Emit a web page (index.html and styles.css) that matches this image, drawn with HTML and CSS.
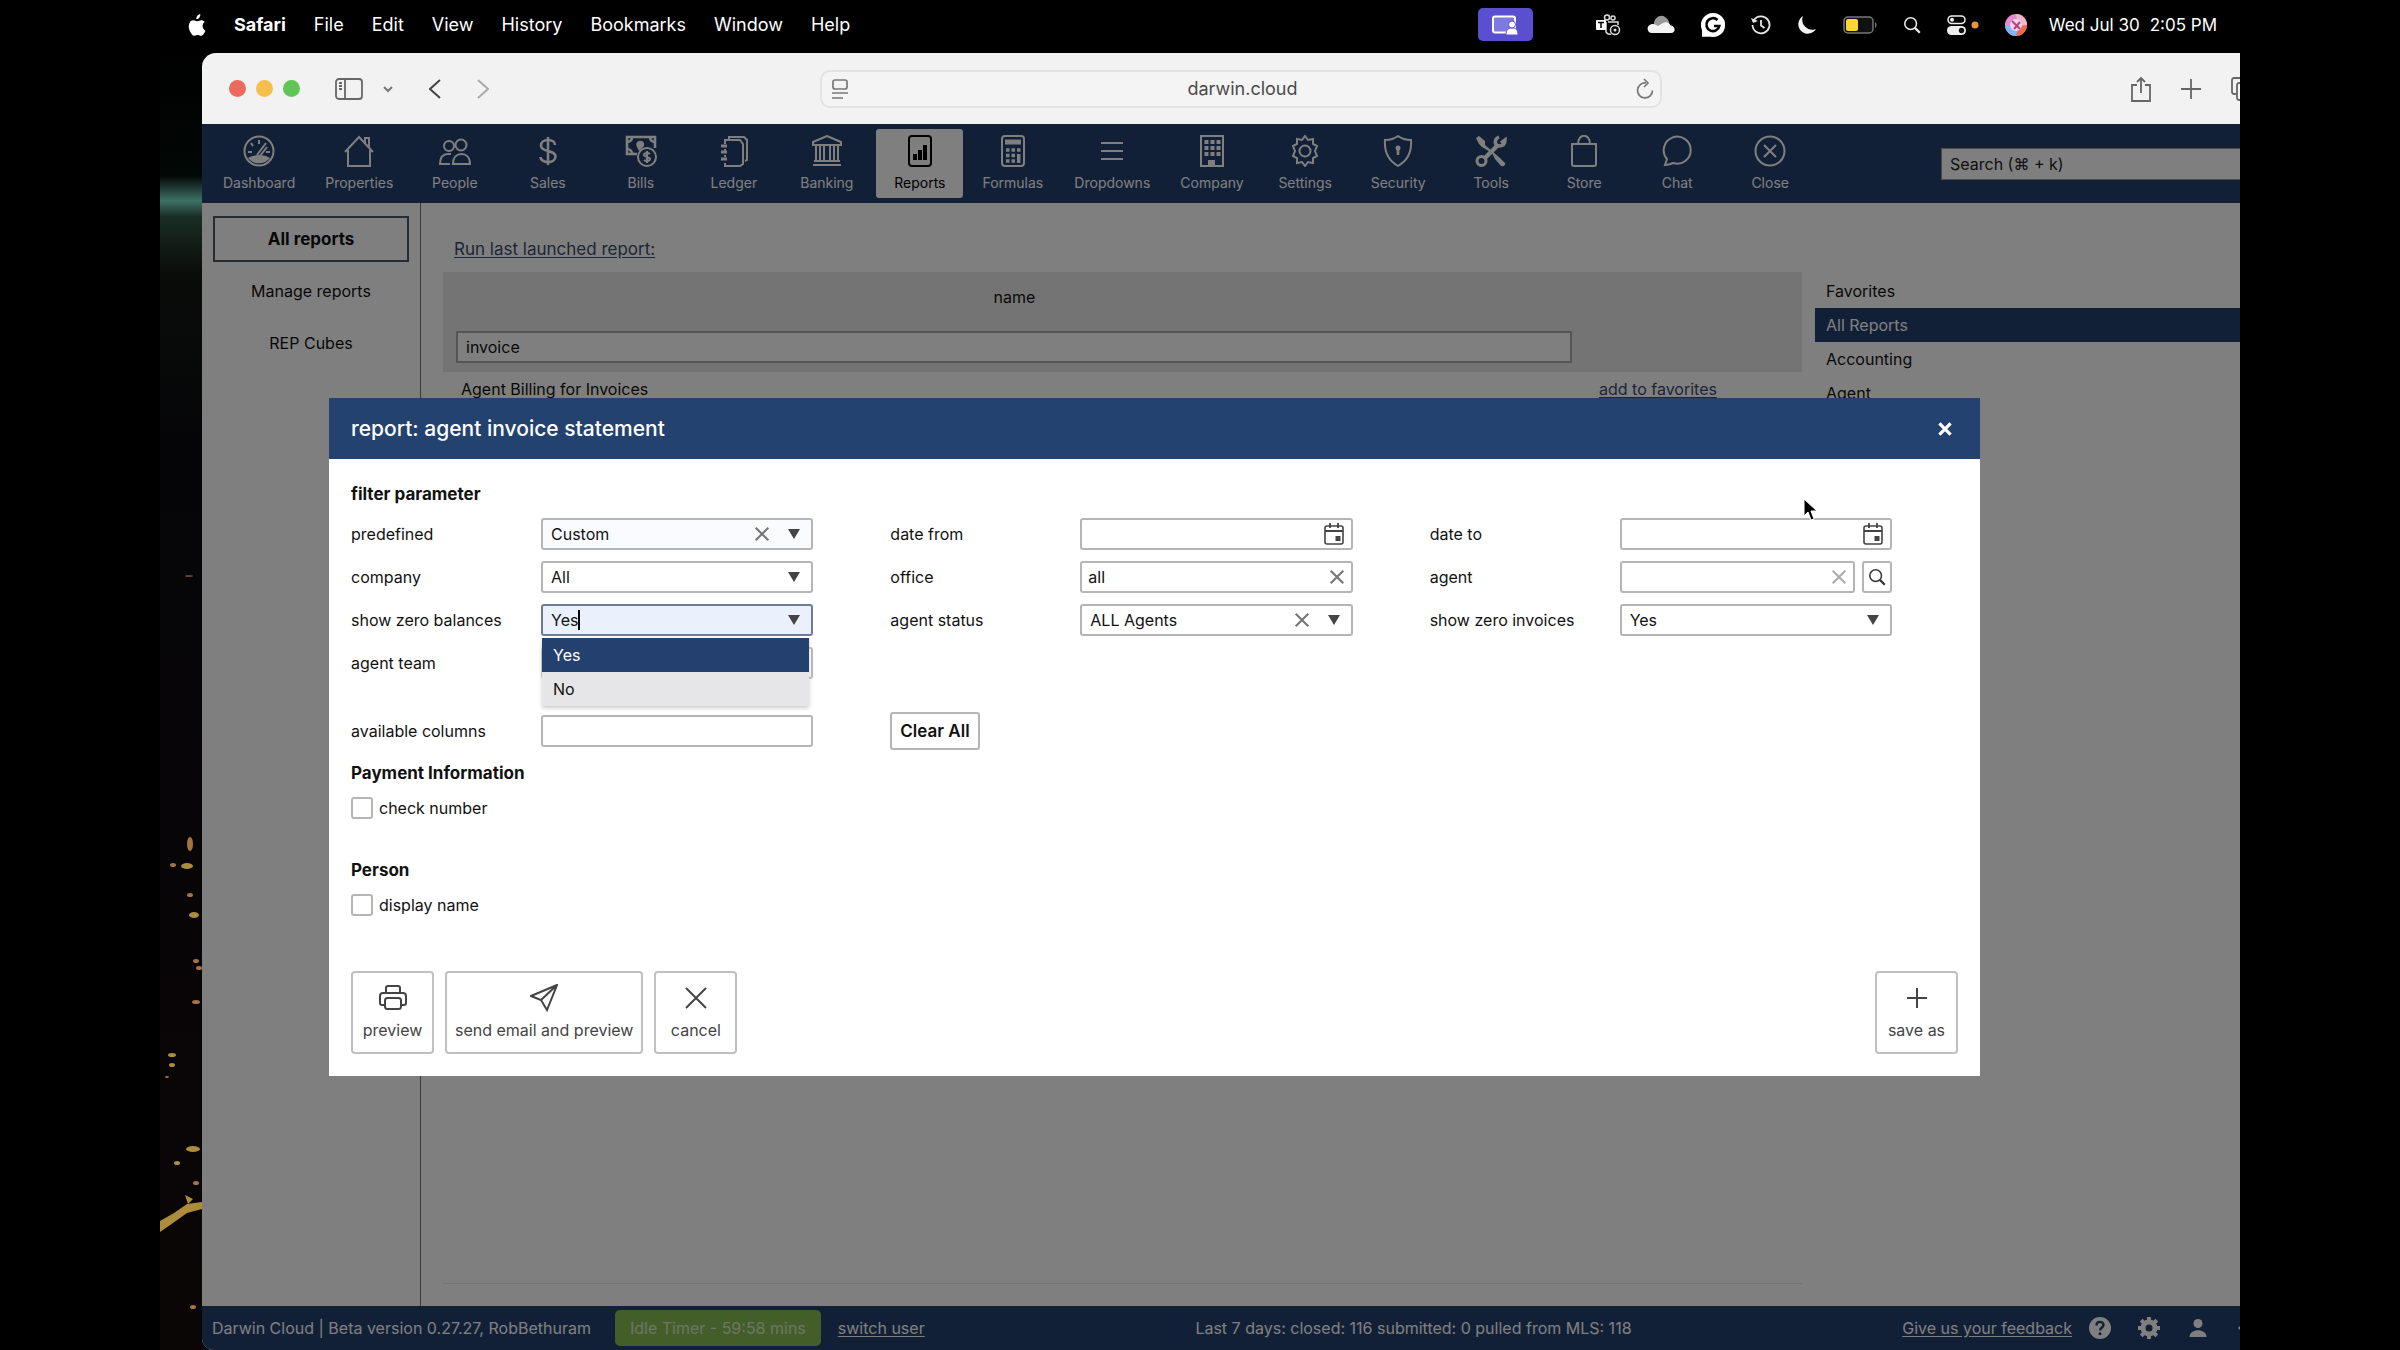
FILE: index.html
```html
<!DOCTYPE html>
<html lang="en">
<head>
    <meta charset="UTF-8">
    <meta name="viewport" content="width=device-width, initial-scale=1.0">
    <title>Darwin Cloud - Reports</title>
    <link rel="stylesheet" href="styles.css">
</head>
<body>
    <!-- shared icons -->
    <svg class="sprite" aria-hidden="true">
        <symbol id="i-x" viewBox="0 0 20 20"><path d="M3 3l14 14M17 3L3 17" fill="none" stroke="currentColor" stroke-width="2.4"/></symbol>
        <symbol id="i-x-bold" viewBox="0 0 20 20"><path d="M3 3l14 14M17 3L3 17" fill="none" stroke="currentColor" stroke-width="4"/></symbol>
        <symbol id="i-down" viewBox="0 0 12 10"><path d="M0 0h12L6 10z" fill="currentColor"/></symbol>
        <symbol id="i-calendar" viewBox="0 0 20 22">
            <rect x="1" y="3" width="18" height="18" rx="2" fill="none" stroke="currentColor" stroke-width="1.6"/>
            <path d="M1 8h18M6 0v5M14 0v5" fill="none" stroke="currentColor" stroke-width="1.8"/>
            <rect x="11.500" y="13" width="5" height="5" fill="currentColor"/>
        </symbol>
        <symbol id="i-search" viewBox="0 0 20 20"><circle cx="8.500" cy="8.500" r="6.500" fill="none" stroke="currentColor" stroke-width="1.700"/><path d="M13.200 13.200l5.500 5.500" stroke="currentColor" stroke-width="2.400"/></symbol>
    </svg>

    <div class="screen">
        <header class="menubar">
            <svg class="apple" viewBox="0 0 18 22"><path d="M12.300 0c.2 1.700-.5 3-1.300 3.900-.8.900-1.700 1.300-2.700 1.200-.1-1.500.5-2.700 1.300-3.500C10.400.7 11.500.1 12.300 0zM17.400 16.800c-.5 1.300-1.100 2.200-1.800 3.200-.8 1.100-1.600 1.800-2.500 1.800-1.200 0-1.900-.8-3.500-.8s-2.300.8-3.500.8c-1 0-1.900-.9-2.700-2C1 16.300 0 12.400 1.300 9.400c.8-1.900 2.400-3.100 4.100-3.100 1.500 0 2.500.9 3.900.9 1.300 0 2.300-.9 4-.9 1.300 0 2.600.6 3.500 1.800-3.300 1.900-2.700 6.800.6 8.700z" fill="#fff"/></svg>
            <nav class="menus">
                <strong>Safari</strong>
                <span>File</span>
                <span>Edit</span>
                <span>View</span>
                <span>History</span>
                <span>Bookmarks</span>
                <span>Window</span>
                <span>Help</span>
            </nav>
            <div class="status">
                <span class="share-badge">
                    <svg width="28" height="20" viewBox="0 0 28 20"><rect x="2" y="1.500" width="22" height="16" rx="2" fill="#7f7ae0" stroke="#fff" stroke-width="2"/><path d="M15 20c0-5 2-7 6-7s6 2 6 7z" fill="#fff" stroke="#5a50cf"/><circle cx="21" cy="9.500" r="3.500" fill="#fff" stroke="#5a50cf"/></svg>
                </span>
                <div class="status-icons">
                    <svg width="26" height="22" viewBox="0 0 26 22"><g fill="none" stroke="#ddd" stroke-width="1.500"><circle cx="12" cy="3.500" r="2.500"/><circle cx="18" cy="4" r="2"/><path d="M13 8h10v3M11 8v10c2 3 5 2 5 2"/><circle cx="20" cy="16" r="4.500"/></g><rect x="1" y="6" width="10" height="10" rx="1" fill="#fff"/><path d="M3 8.500h6M6 8.500V14" stroke="#000" stroke-width="1.500"/><circle cx="20" cy="16" r="1.500" fill="#ddd"/></svg>
                    <svg width="28" height="19" viewBox="0 0 28 19"><path d="M7 8C8 2 14-1 18 2c3 2 4 4 4 6l-9 6-7-3z" fill="#9a9a9a"/><path d="M5 18C-1 18-1 9 6 9c2 0 3 1 5 2l5-3c4-2 7 0 7 2 6 1 6 8 1 8z" fill="#f4f4f4"/></svg>
                    <svg width="24" height="24" viewBox="0 0 24 24"><path d="M12 0a12 12 0 1 1-2 23.800H1V17A12 12 0 0 1 12 0z" fill="#fff"/><path d="M16.500 7a6.500 6.500 0 1 0 1.800 6H13" fill="none" stroke="#000" stroke-width="2.600"/></svg>
                    <svg width="20" height="20" viewBox="0 0 20 20"><path d="M3 5a8.500 8.500 0 1 1-1.500 5M10 5v5.500l3.500 2.500" fill="none" stroke="#e6e6e6" stroke-width="1.800"/><path d="M0 3l2 5 5-2z" fill="#e6e6e6"/></svg>
                    <svg width="20" height="20" viewBox="0 0 20 20"><path d="M6 1a9.500 9.500 0 1 0 13 13A10 10 0 0 1 6 1z" fill="#f2f2f2"/></svg>
                    <svg width="34" height="18" viewBox="0 0 34 18"><rect x="1" y="1" width="29" height="16" rx="4" fill="#111" stroke="#777" stroke-width="1.500"/><path d="M32 6c2 1 2 5 0 6z" fill="#777"/><rect x="3" y="3" width="12" height="12" rx="2" fill="#fbd82f"/></svg>
                    <svg width="18" height="20" viewBox="0 0 20 20" color="#eee"><use href="#i-search"/></svg>
                    <svg width="32" height="20" viewBox="0 0 32 20"><rect x="1" y="1" width="17" height="7.500" rx="3.700" fill="none" stroke="#eee" stroke-width="1.500"/><circle cx="5" cy="4.700" r="2" fill="#eee"/><rect x="0" y="11" width="19" height="9" rx="4.500" fill="#eee"/><circle cx="14.500" cy="15.500" r="2.700" fill="#111"/><circle cx="28" cy="10" r="3.500" fill="#f09133"/></svg>
                    <svg width="22" height="22" viewBox="0 0 22 22"><circle cx="11" cy="11" r="11" fill="#e78bd0"/><path d="M11 0a11 11 0 0 1 11 11l-9 2z" fill="#f4b7c8"/><path d="M0 11a11 11 0 0 0 11 11l3-9z" fill="#7fb6f7"/><path d="M11 22a11 11 0 0 0 11-11l-8 1z" fill="#f06a4a"/><circle cx="11" cy="11" r="6" fill="#e9d5f4"/><path d="M7 7l8 8M15 8l-6 7" stroke="#c2406f" stroke-width="2"/></svg>
                </div>
                <time class="clock"><span>Wed Jul 30</span><span>2:05 PM</span></time>
            </div>
        </header>

        <div class="desktop">
            <!-- city lights wallpaper peeking out left of the window -->
            <svg class="wallpaper" viewBox="0 0 54 1297" preserveAspectRatio="xMinYMin slice" aria-hidden="true">
                <defs>
                    <linearGradient id="sky" x1="0" y1="0" x2="0" y2="1">
                        <stop offset="0" stop-color="#000"/>
                        <stop offset=".095" stop-color="#020806"/>
                        <stop offset=".114" stop-color="#3d7064"/>
                        <stop offset=".126" stop-color="#1a2e24"/>
                        <stop offset=".17" stop-color="#0a0c0a"/>
                        <stop offset=".3" stop-color="#050507"/>
                        <stop offset=".7" stop-color="#080507"/>
                        <stop offset="1" stop-color="#0b0606"/>
                    </linearGradient>
                </defs>
                <rect width="54" height="1297" fill="url(#sky)"/>
                <g fill="#c9a545" opacity=".85">
                    <ellipse cx="27" cy="813" rx="6" ry="3"/>
                    <ellipse cx="34" cy="862" rx="5" ry="3"/>
                    <ellipse cx="12" cy="1002" rx="4" ry="2"/>
                    <ellipse cx="12" cy="1012" rx="3" ry="2"/>
                    <ellipse cx="33" cy="1096" rx="7" ry="3"/>
                    <ellipse cx="17" cy="1110" rx="3" ry="2"/>
                    <path d="M0 1168l14-8 13-9 15-2v7l-15 4-14 10-13 9z"/>
                    <path d="M25 1142l8 4-5 5z"/>
                </g>
                <g fill="#a5733f">
                    <ellipse cx="30" cy="791" rx="3" ry="7"/>
                    <ellipse cx="13" cy="812" rx="3" ry="2"/>
                    <ellipse cx="30" cy="842" rx="3" ry="2"/>
                    <ellipse cx="36" cy="908" rx="3" ry="2"/>
                    <ellipse cx="39" cy="915" rx="3" ry="2"/>
                    <ellipse cx="36" cy="949" rx="4" ry="2"/>
                    <ellipse cx="7" cy="1024" rx="2" ry="1"/>
                    <ellipse cx="36" cy="1130" rx="3" ry="2"/>
                    <ellipse cx="33" cy="1254" rx="3" ry="2"/>
                    <ellipse cx="29" cy="523" rx="4" ry="1" opacity=".6"/>
                </g>
            </svg>

            <div class="window">
                <div class="toolbar">
                    <div class="toolbar-left">
                        <span class="dot red"></span>
                        <span class="dot yellow"></span>
                        <span class="dot green"></span>
                        <svg class="sidebar-icon" width="28" height="22" viewBox="0 0 28 22" fill="none" stroke="#666" stroke-width="1.800"><rect x="1" y="1" width="26" height="20" rx="3"/><path d="M10 1v20M4 5h3M4 8h3M4 11h3"/></svg>
                        <svg class="menu-chevron" width="10" height="8" viewBox="0 0 10 8" fill="none" stroke="#777" stroke-width="2"><path d="M1 2l4 4 4-4"/></svg>
                        <svg class="back" width="12" height="20" viewBox="0 0 12 20" fill="none" stroke="#444" stroke-width="2"><path d="M11 1L1 10l10 9"/></svg>
                        <svg class="forward" width="12" height="20" viewBox="0 0 12 20" fill="none" stroke="#aaa" stroke-width="2"><path d="M1 1l10 9-10 9"/></svg>
                    </div>
                    <div class="urlbar">
                        <svg width="18" height="20" viewBox="0 0 18 20" fill="none" stroke="#777" stroke-width="1.700"><rect x="2" y="1" width="14" height="9" rx="2"/><path d="M1 14h16M1 19h11"/></svg>
                        <span>darwin.cloud</span>
                        <svg width="18" height="21" viewBox="0 0 18 21" fill="none" stroke="#777" stroke-width="1.700"><path d="M10 5a7.500 7.500 0 1 0 6.500 7.500M8 1l4 4-4 4"/></svg>
                    </div>
                    <div class="toolbar-right">
                        <svg width="20" height="26" viewBox="0 0 20 26" fill="none" stroke="#666" stroke-width="1.800"><path d="M6 9H1v16h18V9h-5M10 17V2M6 6l4-4 4 4"/></svg>
                        <svg width="20" height="20" viewBox="0 0 20 20" fill="none" stroke="#666" stroke-width="1.800"><path d="M10 0v20M0 10h20"/></svg>
                        <svg width="24" height="24" viewBox="0 0 24 24" fill="none" stroke="#666" stroke-width="1.800"><path d="M5 17H3a2 2 0 0 1-2-2V3a2 2 0 0 1 2-2h13"/><rect x="6" y="6" width="17" height="17" rx="2"/></svg>
                    </div>
                </div>

                <div class="app">
                    <nav class="main-nav">
                        <a href="#"><svg viewBox="0 0 32 32"><circle cx="16" cy="16" r="14.500"/><path d="M16 5v4M8 8l2 3M5 17h4M27 17h-4M14 20l9-12M17 21l7-9"/><path class="solid" d="M5 23c6-4 16-4 22 0a14 14 0 0 1-22 0z"/></svg>Dashboard</a>
                        <a href="#"><svg viewBox="0 0 32 32"><path d="M2 17L16 2l14 15M5 15v16h22V15M22 8V3h4v9"/></svg>Properties</a>
                        <a href="#"><svg viewBox="0 0 32 32"><circle cx="10" cy="11" r="5"/><circle cx="22" cy="10" r="5.500"/><path d="M11 29H1c0-7 3-10 8-10h3M14 29h17c0-7-4-10-8.500-10S14 22 14 29z"/></svg>People</a>
                        <a href="#"><svg viewBox="0 0 32 32"><path stroke-width="2.600" d="M16 2v28M23 10c0-3-3-5-7-5s-7 2-7 5.500 3 4.500 7 5.500 7.500 2 7.500 5.500S20 27 16 27s-7.500-2-7.500-5"/></svg>Sales</a>
                        <a href="#"><svg viewBox="0 0 32 32"><path stroke-width="2.600" d="M12 19H2V2h28v11M2 7c3 0 5-2 5-5M30 7c-3 0-5-2-5-5M2 14c3 0 5 2 5 5"/><path class="solid" d="M12 12a4 4 0 1 1 7-1l-5 5z"/><circle cx="22" cy="22" r="9"/><path d="M22 16v12M25 19c-2-2-6-1-6 1s6 2 6 4-4 3-6 1"/></svg>Bills</a>
                        <a href="#"><svg viewBox="0 0 32 32"><path d="M7 9V5h15l3 4v20l-3 2H7v-3M7 14v2M7 20v2M11 5V2h15l3 3v20l-2 1"/><path d="M3 11h6M3 17h6M3 24h6" stroke-width="3"/></svg>Ledger</a>
                        <a href="#"><svg viewBox="0 0 32 32"><path d="M2 10V7l14-6 14 6v3zM2 30h28M3 26h26M5 10v16M9 10v16M13 10v16M19 10v16M23 10v16M27 10v16"/></svg>Banking</a>
                        <a href="#" class="active"><svg viewBox="0 0 32 32"><rect x="5" y="1" width="22" height="30" rx="3"/><path stroke-width="4" d="M11 25v-6M16 25V15M21 25V10"/></svg>Reports</a>
                        <a href="#"><svg viewBox="0 0 32 32"><rect x="5" y="1" width="22" height="30" rx="3"/><path stroke-width="5" d="M8 7h16"/><path stroke-width="3.500" d="M9 15h3.500M14.500 15h3.500M20 15h3.500M9 20.500h3.500M14.500 20.500h3.500M9 26h3.500M14.500 26h3.500M21.700 19v9"/></svg>Formulas</a>
                        <a href="#"><svg viewBox="0 0 32 32"><path d="M5 8h22M5 16h22M5 24h22"/></svg>Dropdowns</a>
                        <a href="#"><svg viewBox="0 0 32 32"><rect x="5" y="1" width="22" height="30"/><path stroke-width="4" stroke-dasharray="4 2" d="M8.500 7h17M8.500 13h17M8.500 19h17"/><path class="solid" d="M12 31v-6h7v6z"/></svg>Company</a>
                        <a href="#"><svg viewBox="0 0 32 32"><path d="M13 5l3-4 3 4 5-1 0 5 4 2-2 5 2 5-4 2v5l-5-1-3 4-3-4-5 1v-5l-4-2 2-5-2-5 4-2V4z"/><circle cx="16" cy="16" r="5.500"/></svg>Settings</a>
                        <a href="#"><svg viewBox="0 0 32 32"><path d="M16 1c4 3 8 4 13 4 1 13-4 21-13 26C7 26 2 18 3 5c5 0 9-1 13-4z"/><circle class="solid" cx="16" cy="13" r="2.500"/><path stroke-width="2.600" d="M16 13v7"/></svg>Security</a>
                        <a href="#"><svg viewBox="0 0 32 32"><path class="solid" d="M1 3l3-2 6 5v4l15 13 5 5c1 2-2 4-4 3l-6-7-3-6L7 12 4 9z"/><path stroke-width="4.500" d="M9 24L23 10"/><path stroke-width="3.500" d="M24 2c-5 2-5 8 0 9 4 0 6-2 6-6l-4 3"/><circle cx="6.500" cy="26" r="4.500" stroke-width="3"/></svg>Tools</a>
                        <a href="#"><svg viewBox="0 0 32 32"><path d="M4 9h24v20a2 2 0 0 1-2 2H6a2 2 0 0 1-2-2zM10 9c0-11 12-11 12 0"/></svg>Store</a>
                        <a href="#"><svg viewBox="0 0 32 32"><path d="M4 30l2-6A13.500 13.500 0 1 1 12 28c-2 1-5 2-8 2z"/></svg>Chat</a>
                        <a href="#"><svg viewBox="0 0 32 32"><circle cx="16" cy="16" r="14.500"/><path d="M10 10l12 12M22 10L10 22"/></svg>Close</a>
                        <input class="nav-search" type="text" placeholder="Search (⌘ + k)" aria-label="Search">
                    </nav>

                    <div class="page">
                        <aside class="side-tabs">
                            <button type="button" class="current">All reports</button>
                            <button type="button">Manage reports</button>
                            <button type="button">REP Cubes</button>
                        </aside>
                        <main class="content">
                            <a class="last-report" href="#">Run last launched report:</a>
                            <div class="columns">
                                <div class="report-list">
                                    <table>
                                        <thead>
                                            <tr><th>name</th><th class="fav"></th></tr>
                                            <tr class="filter"><td><input type="text" value="invoice" aria-label="name filter"></td><td></td></tr>
                                        </thead>
                                        <tbody>
                                            <tr><td>Agent Billing for Invoices</td><td class="fav"><a href="#">add to favorites</a></td></tr>
                                        </tbody>
                                    </table>
                                </div>
                                <ul class="categories">
                                    <li>Favorites</li>
                                    <li class="selected">All Reports</li>
                                    <li>Accounting</li>
                                    <li>Agent</li>
                                </ul>
                            </div>
                        </main>
                    </div>

                    <footer class="statusbar">
                        <span>Darwin Cloud | Beta version 0.27.27, RobBethuram</span>
                        <span class="idle">Idle Timer - 59:58 mins</span>
                        <a href="#">switch user</a>
                        <span class="summary">Last 7 days: closed: 116 submitted: 0 pulled from MLS: 118</span>
                        <a href="#">Give us your feedback</a>
                        <span class="footer-icons">
                            <svg viewBox="0 0 22 22"><circle cx="11" cy="11" r="11" fill="#fff"/><path d="M7.500 8.500c0-5 7-4.500 7-.5 0 2.500-3.500 2.500-3.500 5.500" fill="none" stroke="#24406f" stroke-width="2.400"/><circle cx="11" cy="16.800" r="1.500" fill="#24406f"/></svg>
                            <svg viewBox="0 0 22 22"><circle cx="11" cy="11" r="6" fill="none" stroke="#fff" stroke-width="5"/><path d="M11 0v4M11 18v4M0 11h4M18 11h4M3.200 3.200L6 6M16 16l2.800 2.800M3.200 18.800L6 16M16 6l2.800-2.800" stroke="#fff" stroke-width="4"/></svg>
                            <svg viewBox="0 0 22 22"><circle cx="11" cy="6.500" r="4.500" fill="#fff"/><path d="M2.500 20c0-9 17-9 17 0z" fill="#fff"/></svg>
                            <svg viewBox="0 0 22 22"><path d="M2 11l7-7v4h11v6H9v4z" fill="#fff"/></svg>
                        </span>
                    </footer>

                    <div class="overlay">
                        <form class="modal" role="dialog" aria-labelledby="modal-title">
                            <div class="modal-header">
                                <h1 id="modal-title">report: agent invoice statement</h1>
                                <button type="button" aria-label="Close"><svg width="16" height="16"><use href="#i-x-bold"/></svg></button>
                            </div>
                            <div class="modal-body">
                                <h2>filter parameter</h2>
                                <div class="fields">
                                    <div class="field">
                                        <label for="predefined">predefined</label>
                                        <div class="control tinted">
                                            <select id="predefined"><option>Custom</option></select>
                                            <span class="adorn"><svg class="x"><use href="#i-x"/></svg><svg class="down"><use href="#i-down"/></svg></span>
                                        </div>
                                    </div>
                                    <div class="field">
                                        <label for="date-from">date from</label>
                                        <div class="control">
                                            <input id="date-from" type="text">
                                            <span class="adorn"><svg class="cal"><use href="#i-calendar"/></svg></span>
                                        </div>
                                    </div>
                                    <div class="field">
                                        <label for="date-to">date to</label>
                                        <div class="control">
                                            <input id="date-to" type="text">
                                            <span class="adorn"><svg class="cal"><use href="#i-calendar"/></svg></span>
                                        </div>
                                    </div>

                                    <div class="field">
                                        <label for="company">company</label>
                                        <div class="control">
                                            <select id="company"><option>All</option></select>
                                            <span class="adorn"><svg class="down"><use href="#i-down"/></svg></span>
                                        </div>
                                    </div>
                                    <div class="field">
                                        <label for="office">office</label>
                                        <div class="control">
                                            <input id="office" type="text" value="all">
                                            <span class="adorn end-x"><svg class="x"><use href="#i-x"/></svg></span>
                                        </div>
                                    </div>
                                    <div class="field">
                                        <label for="agent">agent</label>
                                        <div class="control-row">
                                            <div class="control">
                                                <input id="agent" type="text">
                                                <span class="adorn end-x faded"><svg class="x"><use href="#i-x"/></svg></span>
                                            </div>
                                            <button type="button" class="lookup" aria-label="Find agent"><svg width="18" height="18"><use href="#i-search"/></svg></button>
                                        </div>
                                    </div>

                                    <div class="field">
                                        <label for="zero-balances">show zero balances</label>
                                        <div class="control open">
                                            <input id="zero-balances" type="text" value="Yes" role="combobox" aria-expanded="true" aria-controls="zero-options">
                                            <span class="caret"></span>
                                            <span class="adorn"><svg class="down"><use href="#i-down"/></svg></span>
                                            <ul id="zero-options" class="options" role="listbox">
                                                <li role="option" aria-selected="true">Yes</li>
                                                <li role="option" aria-selected="false">No</li>
                                            </ul>
                                        </div>
                                    </div>
                                    <div class="field">
                                        <label for="agent-status">agent status</label>
                                        <div class="control">
                                            <select id="agent-status"><option>ALL Agents</option></select>
                                            <span class="adorn"><svg class="x"><use href="#i-x"/></svg><svg class="down"><use href="#i-down"/></svg></span>
                                        </div>
                                    </div>
                                    <div class="field">
                                        <label for="zero-invoices">show zero invoices</label>
                                        <div class="control">
                                            <select id="zero-invoices"><option>Yes</option></select>
                                            <span class="adorn"><svg class="down"><use href="#i-down"/></svg></span>
                                        </div>
                                    </div>

                                    <div class="field">
                                        <label for="agent-team">agent team</label>
                                        <div class="control"><select id="agent-team"><option></option></select></div>
                                    </div>
                                </div>

                                <div class="fields available">
                                    <div class="field">
                                        <label for="columns">available columns</label>
                                        <div class="control"><input id="columns" type="text"></div>
                                    </div>
                                    <div><button type="button" class="clear">Clear All</button></div>
                                </div>

                                <h2>Payment Information</h2>
                                <label class="check"><input type="checkbox">check number</label>
                                <h2>Person</h2>
                                <label class="check"><input type="checkbox">display name</label>

                                <div class="actions">
                                    <button type="button"><svg viewBox="0 0 28 28"><path d="M7 9V4a2 2 0 0 1 2-2h10a2 2 0 0 1 2 2v5M6 21H3a2 2 0 0 1-2-2v-7a3 3 0 0 1 3-3h20a3 3 0 0 1 3 3v7a2 2 0 0 1-2 2h-3"/><rect x="6" y="14" width="16" height="11" rx="2.500"/></svg>preview</button>
                                    <button type="button"><svg viewBox="0 0 28 28"><path d="M27 1L1 12l10 4 6 10zM27 1L11 16"/></svg>send email and preview</button>
                                    <button type="button"><svg viewBox="0 0 28 28"><path d="M4 4l20 20M24 4L4 24"/></svg>cancel</button>
                                    <button type="button" class="save"><svg viewBox="0 0 28 28"><path d="M14 4v20M4 14h20"/></svg>save as</button>
                                </div>
                            </div>
                            <svg class="pointer" width="16" height="24" viewBox="0 0 16 24" aria-hidden="true"><path d="M1 1v17l4-4 3 8 3-1-3-8h6z" fill="#000" stroke="#fff"/></svg>
                        </form>
                    </div>
                </div>
            </div>
        </div>
    </div>
</body>
</html>
```

FILE: styles.css
```css
* {
    box-sizing: border-box;
}

body {
    margin: 0;
    background: #000;
    color: #111;
    font-family: Inter, "Liberation Sans", "DejaVu Sans", sans-serif;
    font-size: 16px;
    line-height: 22px;
}

button, input, select {
    font: inherit;
    color: inherit;
}

a {
    color: inherit;
    text-underline-offset: 2px;
}

h1, h2, ul {
    margin: 0;
    padding: 0;
}

li {
    list-style: none;
}

svg {
    flex: none;
}

.sprite {
    position: absolute;
    width: 0;
    height: 0;
}

.screen {
    display: flex;
    flex-direction: column;
    height: 100vh;
    margin: 0 160px;
    overflow: hidden;
}

/* mac menu bar */
.menubar {
    display: flex;
    align-items: center;
    height: 53px;
    padding: 0 23px 4px 28px;
    color: #fff;
    font-size: 18px;
}

.apple {
    width: 18px;
    height: 22px;
    margin-right: 28px;
}

.menus {
    display: flex;
    gap: 28px;
}

.status {
    display: flex;
    align-items: center;
    margin-left: auto;
}

.share-badge {
    display: flex;
    align-items: center;
    justify-content: center;
    width: 55px;
    height: 33px;
    margin-right: 62px;
    border-radius: 5px;
    background: #5a50cf;
}

.status-icons {
    display: flex;
    align-items: center;
    gap: 26px;
    margin-right: 22px;
}

.clock {
    display: flex;
    gap: 10px;
    font-size: 17px;
}

.desktop {
    position: relative;
    flex: 1;
    min-height: 0;
    padding-left: 42px;
}

.wallpaper {
    position: absolute;
    top: 0;
    left: 0;
    width: 54px;
    height: 100%;
}

/* browser window */
.window {
    position: relative;
    display: flex;
    flex-direction: column;
    height: 100%;
    border-radius: 14px 0 0 12px;
    overflow: hidden;
}

.toolbar {
    display: grid;
    grid-template-columns: 618fr 842fr 578fr;
    align-items: center;
    height: 71px;
    background: #f2f2f2;
}

.toolbar-left,
.toolbar-right {
    display: flex;
    align-items: center;
}

.toolbar-left {
    padding-left: 27px;
}

.dot {
    width: 17px;
    height: 17px;
    margin-right: 10px;
    border-radius: 50%;
}

.red { background: #ee6a5f; }
.yellow { background: #f5bf4f; }
.green { background: #61c555; }

.sidebar-icon {
    margin: 0 20px 0 25px;
}

.back {
    margin: 0 36px;
}

.toolbar-right {
    justify-content: flex-end;
    gap: 30px;
    margin-right: -15px;
}

.urlbar {
    display: flex;
    align-items: center;
    justify-content: space-between;
    height: 38px;
    padding: 0 6px 0 9px;
    border: 2px solid #e3e3e3;
    border-radius: 10px;
    background: #f4f4f4;
    color: #4a4a4a;
    font-size: 18px;
}

/* application */
.app {
    position: relative;
    display: flex;
    flex: 1;
    flex-direction: column;
    min-height: 0;
    background: #fff;
}

.main-nav {
    display: flex;
    align-items: center;
    gap: 6px;
    height: 79px;
    padding-left: 9px;
    background: #24406f;
    color: #fff;
}

.main-nav a {
    display: flex;
    flex-direction: column;
    align-items: center;
    gap: 6px;
    min-width: 87px;
    height: 69px;
    padding: 6px 12px 0;
    border-radius: 3px;
    font-size: 14px;
    line-height: 20px;
    text-decoration: none;
}

.main-nav svg {
    width: 32px;
    height: 32px;
    fill: none;
    stroke: currentColor;
    stroke-width: 2;
}

.main-nav .solid {
    fill: currentColor;
    stroke: none;
}

.main-nav .active {
    background: #fff;
    color: #000;
}

.nav-search {
    width: 360px;
    height: 32px;
    margin: 0 -61px 0 auto;
    padding: 0 8px;
    border: 1px solid #999;
    background: #fff;
}

.nav-search::placeholder {
    color: #222;
    opacity: 1;
}

.page {
    display: flex;
    flex: 1;
    min-height: 0;
}

.side-tabs {
    display: flex;
    flex-direction: column;
    gap: 6px;
    width: 219px;
    padding: 13px 11px;
    border-right: 1px solid #777;
}

.side-tabs button {
    height: 46px;
    border: 2px solid transparent;
    background: none;
}

.side-tabs .current {
    border-color: #4a5a66;
    font-size: 17px;
    font-weight: 700;
}

.content {
    display: flex;
    flex: 1;
    flex-direction: column;
    padding: 35px 0 22px 22px;
}

.last-report {
    align-self: flex-start;
    margin: 0 0 12px 11px;
    color: #3a4c70;
    font-size: 17px;
}

.columns {
    display: flex;
    flex: 1;
    gap: 13px;
}

.report-list {
    flex: 1;
    border-bottom: 1px solid #e4e4e4;
}

.report-list table {
    width: 100%;
    border-collapse: collapse;
}

.report-list thead {
    background: #e9e9e9;
}

.report-list th {
    height: 50px;
    padding: 0;
    font-weight: 400;
}

.report-list th.fav {
    width: 216px;
}

.report-list td {
    height: 34px;
    padding: 0 0 0 18px;
}

.report-list td.fav {
    padding-left: 13px;
    color: #3a4c70;
}

.filter td {
    height: 50px;
    padding: 9px 14px 0 13px;
    vertical-align: top;
}

.filter input {
    width: 100%;
    height: 32px;
    padding: 0 8px;
    border: 2px solid #aaa;
    background: #fff;
    vertical-align: top;
}

.categories {
    width: 425px;
    margin-top: 2px;
}

.categories li {
    padding: 6px 11px;
}

.categories .selected {
    background: #24406f;
    color: #fff;
}

.statusbar {
    display: flex;
    align-items: center;
    height: 44px;
    padding-left: 10px;
    background: #24406f;
    color: #fff;
}

.idle {
    margin: 0 17px 0 24px;
    padding: 7px 15px;
    border-radius: 5px;
    background: #86bd52;
    color: #dcebcd;
}

.summary {
    margin: 0 auto;
}

.footer-icons {
    display: flex;
    gap: 27px;
    margin: 0 -18px 0 17px;
}

.footer-icons svg {
    width: 22px;
    height: 22px;
}

/* modal */
.overlay {
    position: absolute;
    inset: 0;
    padding: 274px 260px 0 127px;
    background: rgba(0, 0, 0, .5);
}

.modal {
    position: relative;
    background: #fff;
}

.modal-header {
    display: flex;
    align-items: center;
    justify-content: space-between;
    height: 61px;
    padding: 0 22px;
    background: #24426f;
    color: #fff;
}

.modal-header h1 {
    font-size: 21px;
    font-weight: 500;
}

.modal-header button {
    display: flex;
    padding: 5px;
    border: 0;
    background: none;
}

.modal-body {
    padding: 24px 22px 22px;
}

.modal h2 {
    font-size: 17px;
    font-weight: 700;
}

.fields {
    display: grid;
    grid-template-columns: repeat(3, 1fr);
    align-items: center;
    gap: 11px 77px;
    margin-top: 13px;
    padding-right: 66px;
}

.fields.available {
    margin: 33px 0 12px;
}

.field {
    display: grid;
    grid-template-columns: 190px 1fr;
    align-items: center;
}

.control {
    position: relative;
    flex: 1;
    height: 32px;
}

.control input,
.control select {
    display: block;
    width: 100%;
    height: 100%;
    padding: 0 8px;
    border: 2px solid #b5b5b5;
    border-radius: 3px;
    background: #fff;
    outline: none;
    appearance: none;
}

.control input {
    padding: 0 6px;
}

.control.tinted select {
    background: #fafbff;
}

.control.open input {
    padding: 0 8px;
    border-color: #6f7c96;
    background: #ebf0fd;
}

.adorn {
    position: absolute;
    top: 0;
    right: 13px;
    display: flex;
    align-items: center;
    gap: 17px;
    height: 100%;
    color: #444;
    pointer-events: none;
}

.adorn.end-x {
    right: 7px;
}

.adorn.faded {
    opacity: .6;
}

.adorn .x {
    width: 18px;
    height: 18px;
    color: #777;
}

.adorn .down {
    width: 12px;
    height: 10px;
}

.adorn .cal {
    width: 22px;
    height: 22px;
    margin-right: -5px;
}

.caret {
    position: absolute;
    top: 6px;
    left: 37px;
    width: 2px;
    height: 20px;
    background: #000;
}

.options {
    position: absolute;
    z-index: 2;
    top: 34px;
    left: 1px;
    right: 4px;
    background: #e6e6e8;
    box-shadow: 0 2px 4px #ccc;
}

.options li {
    padding: 6px 11px;
}

.options [aria-selected="true"] {
    background: #24406f;
    color: #fff;
}

.control-row {
    display: flex;
    gap: 7px;
}

.lookup {
    display: flex;
    align-items: center;
    justify-content: center;
    width: 30px;
    height: 32px;
    padding: 0;
    border: 2px solid #b5b5b5;
    border-radius: 3px;
    background: #fff;
    color: #333;
}

.clear {
    height: 38px;
    padding: 0 8px;
    border: 2px solid #b5b5b5;
    border-radius: 3px;
    background: #fff;
    font-size: 17px;
    font-weight: 600;
}

.check {
    display: flex;
    align-items: center;
    gap: 6px;
    margin: 13px 0 40px;
}

.check input {
    width: 22px;
    height: 22px;
    margin: 0;
    border: 2px solid #b5b5b5;
    border-radius: 3px;
    appearance: none;
}

.actions {
    display: flex;
    gap: 11px;
    margin-top: 55px;
}

.actions button {
    display: flex;
    flex-direction: column;
    align-items: center;
    gap: 8px;
    min-width: 83px;
    height: 83px;
    padding: 11px 8px 0;
    border: 2px solid #c0c0c0;
    border-radius: 4px;
    background: #fff;
    color: #444;
    line-height: 20px;
}

.actions svg {
    width: 28px;
    height: 28px;
    fill: none;
    stroke: currentColor;
    stroke-width: 2;
}

.actions .save {
    margin-left: auto;
}

.pointer {
    position: absolute;
    top: 100px;
    right: 161px;
}
```
